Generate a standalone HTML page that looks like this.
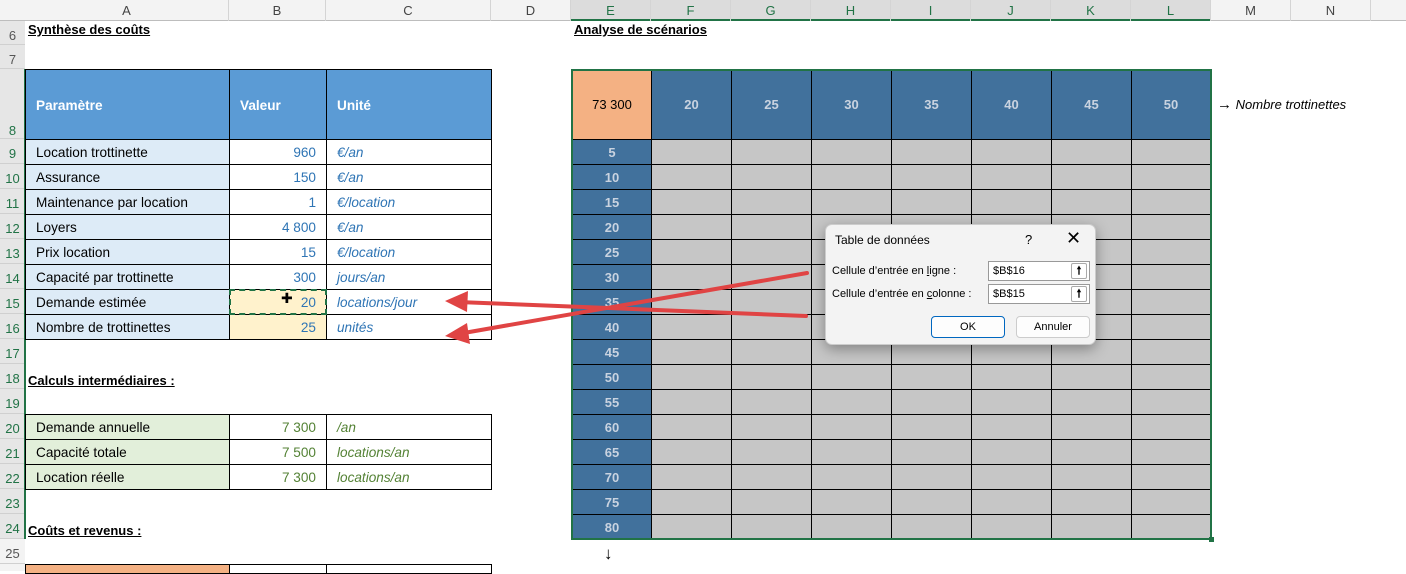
<!DOCTYPE html>
<html><head><meta charset="utf-8"><style>
*{margin:0;padding:0;box-sizing:border-box}
body{width:1406px;height:571px;overflow:hidden;background:#fff;font-family:"Liberation Sans",sans-serif;font-size:14px;position:relative;color:#000}
.a{position:absolute}
.ch{position:absolute;top:0;height:21px;line-height:22px;text-align:center;color:#444;font-size:13px;border-right:1px solid #d4d4d4}
.rn{position:absolute;left:0;width:25px;text-align:center;color:#555;font-size:13px;background:#e6e6e6;border-bottom:1px solid #d0d0d0}
.c{position:absolute;border:1px solid #000;height:26px;line-height:26px;padding:0 10px;white-space:nowrap;font-size:13.6px}
.lb{background:#ddebf7}
.lg{background:#e2efda}
.v{text-align:right;color:#2f75b5}
.vg{text-align:right;color:#548235}
.u{font-style:italic;color:#2f75b5}
.ug{font-style:italic;color:#548235}
.t{position:absolute;font-weight:bold;text-decoration:underline;font-size:13px}
.e{position:absolute;left:572px;width:80px;height:26px;border:1px solid #000;background:#41719c;color:#c9d3e0;font-weight:bold;text-align:center;line-height:26px;font-size:13px}
.h{position:absolute;top:69px;width:81px;height:71px;border:1px solid #000;background:#41719c;color:#c9d3e0;font-weight:bold;text-align:center;line-height:69px;font-size:13px}
</style></head><body>
<div class="a" style="left:0;top:0;width:1406px;height:21px;background:#f3f3f3;border-bottom:1px solid #bdbdbd"></div>
<div class="a" style="left:571px;top:0;width:640px;height:21px;background:#dcdcdc;border-bottom:2px solid #217346"></div>
<div class="ch" style="left:25px;width:204px">A</div>
<div class="ch" style="left:229px;width:97px">B</div>
<div class="ch" style="left:326px;width:165px">C</div>
<div class="ch" style="left:491px;width:80px">D</div>
<div class="ch" style="left:571px;width:80px;color:#217346">E</div>
<div class="ch" style="left:651px;width:80px;color:#217346">F</div>
<div class="ch" style="left:731px;width:80px;color:#217346">G</div>
<div class="ch" style="left:811px;width:80px;color:#217346">H</div>
<div class="ch" style="left:891px;width:80px;color:#217346">I</div>
<div class="ch" style="left:971px;width:80px;color:#217346">J</div>
<div class="ch" style="left:1051px;width:80px;color:#217346">K</div>
<div class="ch" style="left:1131px;width:80px;color:#217346">L</div>
<div class="ch" style="left:1211px;width:80px">M</div>
<div class="ch" style="left:1291px;width:80px">N</div>
<div class="a" style="left:0;top:21px;width:25px;height:550px;background:#f3f3f3"></div>
<div class="rn" style="top:21px;height:24px;line-height:30px">6</div>
<div class="rn" style="top:45px;height:24px;line-height:30px">7</div>
<div class="rn" style="top:69px;height:70px;line-height:124px;color:#217346">8</div>
<div class="rn" style="top:139px;height:25px;line-height:29px;color:#217346">9</div>
<div class="rn" style="top:164px;height:25px;line-height:29px;color:#217346">10</div>
<div class="rn" style="top:189px;height:25px;line-height:29px;color:#217346">11</div>
<div class="rn" style="top:214px;height:25px;line-height:29px;color:#217346">12</div>
<div class="rn" style="top:239px;height:25px;line-height:29px;color:#217346">13</div>
<div class="rn" style="top:264px;height:25px;line-height:29px;color:#217346">14</div>
<div class="rn" style="top:289px;height:25px;line-height:29px;color:#217346">15</div>
<div class="rn" style="top:314px;height:25px;line-height:29px;color:#217346">16</div>
<div class="rn" style="top:339px;height:25px;line-height:29px;color:#217346">17</div>
<div class="rn" style="top:364px;height:25px;line-height:29px;color:#217346">18</div>
<div class="rn" style="top:389px;height:25px;line-height:29px;color:#217346">19</div>
<div class="rn" style="top:414px;height:25px;line-height:29px;color:#217346">20</div>
<div class="rn" style="top:439px;height:25px;line-height:29px;color:#217346">21</div>
<div class="rn" style="top:464px;height:25px;line-height:29px;color:#217346">22</div>
<div class="rn" style="top:489px;height:25px;line-height:29px;color:#217346">23</div>
<div class="rn" style="top:514px;height:25px;line-height:29px;color:#217346">24</div>
<div class="rn" style="top:539px;height:25px;line-height:29px;background:#f3f3f3">25</div>
<div class="a" style="left:24px;top:69px;width:2px;height:470px;background:#217346"></div>

<div class="t" style="left:28px;top:22px">Synthèse des coûts</div>
<div class="t" style="left:574px;top:22px">Analyse de scénarios</div>
<div class="t" style="left:28px;top:373px">Calculs intermédiaires :</div>
<div class="t" style="left:28px;top:523px">Coûts et revenus :</div>

<div class="c" style="left:25px;top:69px;width:205px;height:71px;line-height:71px;background:#5b9bd5;color:#fff;font-weight:bold">Paramètre</div>
<div class="c" style="left:229px;top:69px;width:98px;height:71px;line-height:71px;background:#5b9bd5;color:#fff;font-weight:bold">Valeur</div>
<div class="c" style="left:326px;top:69px;width:166px;height:71px;line-height:71px;background:#5b9bd5;color:#fff;font-weight:bold">Unité</div>

<div class="c lb" style="left:25px;top:139px;width:205px">Location trottinette</div>
<div class="c v" style="left:229px;top:139px;width:98px">960</div>
<div class="c u" style="left:326px;top:139px;width:166px">€/an</div>
<div class="c lb" style="left:25px;top:164px;width:205px">Assurance</div>
<div class="c v" style="left:229px;top:164px;width:98px">150</div>
<div class="c u" style="left:326px;top:164px;width:166px">€/an</div>
<div class="c lb" style="left:25px;top:189px;width:205px">Maintenance par location</div>
<div class="c v" style="left:229px;top:189px;width:98px">1</div>
<div class="c u" style="left:326px;top:189px;width:166px">€/location</div>
<div class="c lb" style="left:25px;top:214px;width:205px">Loyers</div>
<div class="c v" style="left:229px;top:214px;width:98px">4 800</div>
<div class="c u" style="left:326px;top:214px;width:166px">€/an</div>
<div class="c lb" style="left:25px;top:239px;width:205px">Prix location</div>
<div class="c v" style="left:229px;top:239px;width:98px">15</div>
<div class="c u" style="left:326px;top:239px;width:166px">€/location</div>
<div class="c lb" style="left:25px;top:264px;width:205px">Capacité par trottinette</div>
<div class="c v" style="left:229px;top:264px;width:98px">300</div>
<div class="c u" style="left:326px;top:264px;width:166px">jours/an</div>
<div class="c lb" style="left:25px;top:289px;width:205px">Demande estimée</div>
<div class="c v" style="left:229px;top:289px;width:98px;background:#fff2cc">20</div>
<div class="c u" style="left:326px;top:289px;width:166px">locations/jour</div>
<div class="c lb" style="left:25px;top:314px;width:205px">Nombre de trottinettes</div>
<div class="c v" style="left:229px;top:314px;width:98px;background:#fff2cc">25</div>
<div class="c u" style="left:326px;top:314px;width:166px">unités</div>
<div class="a" style="left:229px;top:289px;width:98px;height:26px;border:2px dashed #217346"></div>
<div class="a" style="left:281px;top:290px;font-size:14px;color:#000">✚</div>

<div class="c lg" style="left:25px;top:414px;width:205px">Demande annuelle</div>
<div class="c vg" style="left:229px;top:414px;width:98px">7 300</div>
<div class="c ug" style="left:326px;top:414px;width:166px">/an</div>
<div class="c lg" style="left:25px;top:439px;width:205px">Capacité totale</div>
<div class="c vg" style="left:229px;top:439px;width:98px">7 500</div>
<div class="c ug" style="left:326px;top:439px;width:166px">locations/an</div>
<div class="c lg" style="left:25px;top:464px;width:205px">Location réelle</div>
<div class="c vg" style="left:229px;top:464px;width:98px">7 300</div>
<div class="c ug" style="left:326px;top:464px;width:166px">locations/an</div>

<div class="a" style="left:25px;top:564px;width:205px;height:10px;background:#f4b183;border:1px solid #000"></div>
<div class="a" style="left:229px;top:564px;width:98px;height:10px;border:1px solid #000"></div>
<div class="a" style="left:326px;top:564px;width:166px;height:10px;border:1px solid #000"></div>

<div class="a" style="left:651px;top:139px;width:560px;height:400px;background-color:#c6c6c6;background-image:linear-gradient(to right,#000 1px,transparent 1px),linear-gradient(to bottom,#000 1px,transparent 1px);background-size:80px 100%,100% 25px"></div>
<div class="h" style="left:572px;width:80px;background:#f4b183;color:#000;font-weight:normal">73 300</div>
<div class="h" style="left:651px">20</div>
<div class="h" style="left:731px">25</div>
<div class="h" style="left:811px">30</div>
<div class="h" style="left:891px">35</div>
<div class="h" style="left:971px">40</div>
<div class="h" style="left:1051px">45</div>
<div class="h" style="left:1131px;width:80px">50</div>
<div class="e" style="top:139px">5</div>
<div class="e" style="top:164px">10</div>
<div class="e" style="top:189px">15</div>
<div class="e" style="top:214px">20</div>
<div class="e" style="top:239px">25</div>
<div class="e" style="top:264px">30</div>
<div class="e" style="top:289px">35</div>
<div class="e" style="top:314px">40</div>
<div class="e" style="top:339px">45</div>
<div class="e" style="top:364px">50</div>
<div class="e" style="top:389px">55</div>
<div class="e" style="top:414px">60</div>
<div class="e" style="top:439px">65</div>
<div class="e" style="top:464px">70</div>
<div class="e" style="top:489px">75</div>
<div class="e" style="top:514px;height:25px">80</div>
<div class="a" style="left:571px;top:69px;width:641px;height:471px;border:2px solid #217346"></div>
<div class="a" style="left:1209px;top:537px;width:5px;height:5px;background:#217346"></div>
<div class="a" style="left:1217px;top:96px;font-size:13px"><span style="font-size:15px">→</span> <i>Nombre trottinettes</i></div>
<div class="a" style="left:604px;top:544px;font-size:17px">↓</div>

<svg class="a" style="left:0;top:0" width="1406" height="571">
<g stroke="#e04444" stroke-width="4" fill="#e04444" stroke-linecap="round">
<line x1="807" y1="273" x2="458" y2="334"/>
<line x1="806" y1="316" x2="458" y2="302"/>
</g>
<polygon points="445,336 467,323 470,344" fill="#e04444"/>
<polygon points="445,301 468,291 467,312" fill="#e04444"/>
</svg>

<div class="a" style="left:825px;top:224px;width:271px;height:121px;background:#f3f3f3;border:1px solid #ccc;border-radius:7px;box-shadow:0 4px 14px rgba(0,0,0,.35)">
<div class="a" style="left:9px;top:8px;font-size:12px">Table de données</div>
<div class="a" style="left:199px;top:7px;font-size:13px">?</div>
<div class="a" style="left:240px;top:3px;font-size:18px;font-weight:300">✕</div>
<div class="a" style="left:6px;top:40px;font-size:11px">Cellule d’entrée en <u>l</u>igne :</div>
<div class="a" style="left:6px;top:63px;font-size:11px">Cellule d’entrée en <u>c</u>olonne :</div>
<div class="a" style="left:162px;top:36px;width:102px;height:20px;background:#fff;border:1px solid #999;font-size:11px;line-height:18px;padding-left:4px">$B$16<span class="a" style="right:2px;top:1px;width:16px;height:16px;border:1px solid #aaa;border-radius:2px;line-height:14px;text-align:center;font-weight:bold">🠕</span></div>
<div class="a" style="left:162px;top:59px;width:102px;height:20px;background:#fff;border:1px solid #999;font-size:11px;line-height:18px;padding-left:4px">$B$15<span class="a" style="right:2px;top:1px;width:16px;height:16px;border:1px solid #aaa;border-radius:2px;line-height:14px;text-align:center;font-weight:bold">🠕</span></div>
<div class="a" style="left:105px;top:91px;width:74px;height:22px;background:#fdfdfd;border:1px solid #0067c0;border-radius:4px;text-align:center;line-height:20px;font-size:11px">OK</div>
<div class="a" style="left:190px;top:91px;width:74px;height:22px;background:#fdfdfd;border:1px solid #ccc;border-radius:4px;text-align:center;line-height:20px;font-size:11px">Annuler</div>
</div>
</body></html>
